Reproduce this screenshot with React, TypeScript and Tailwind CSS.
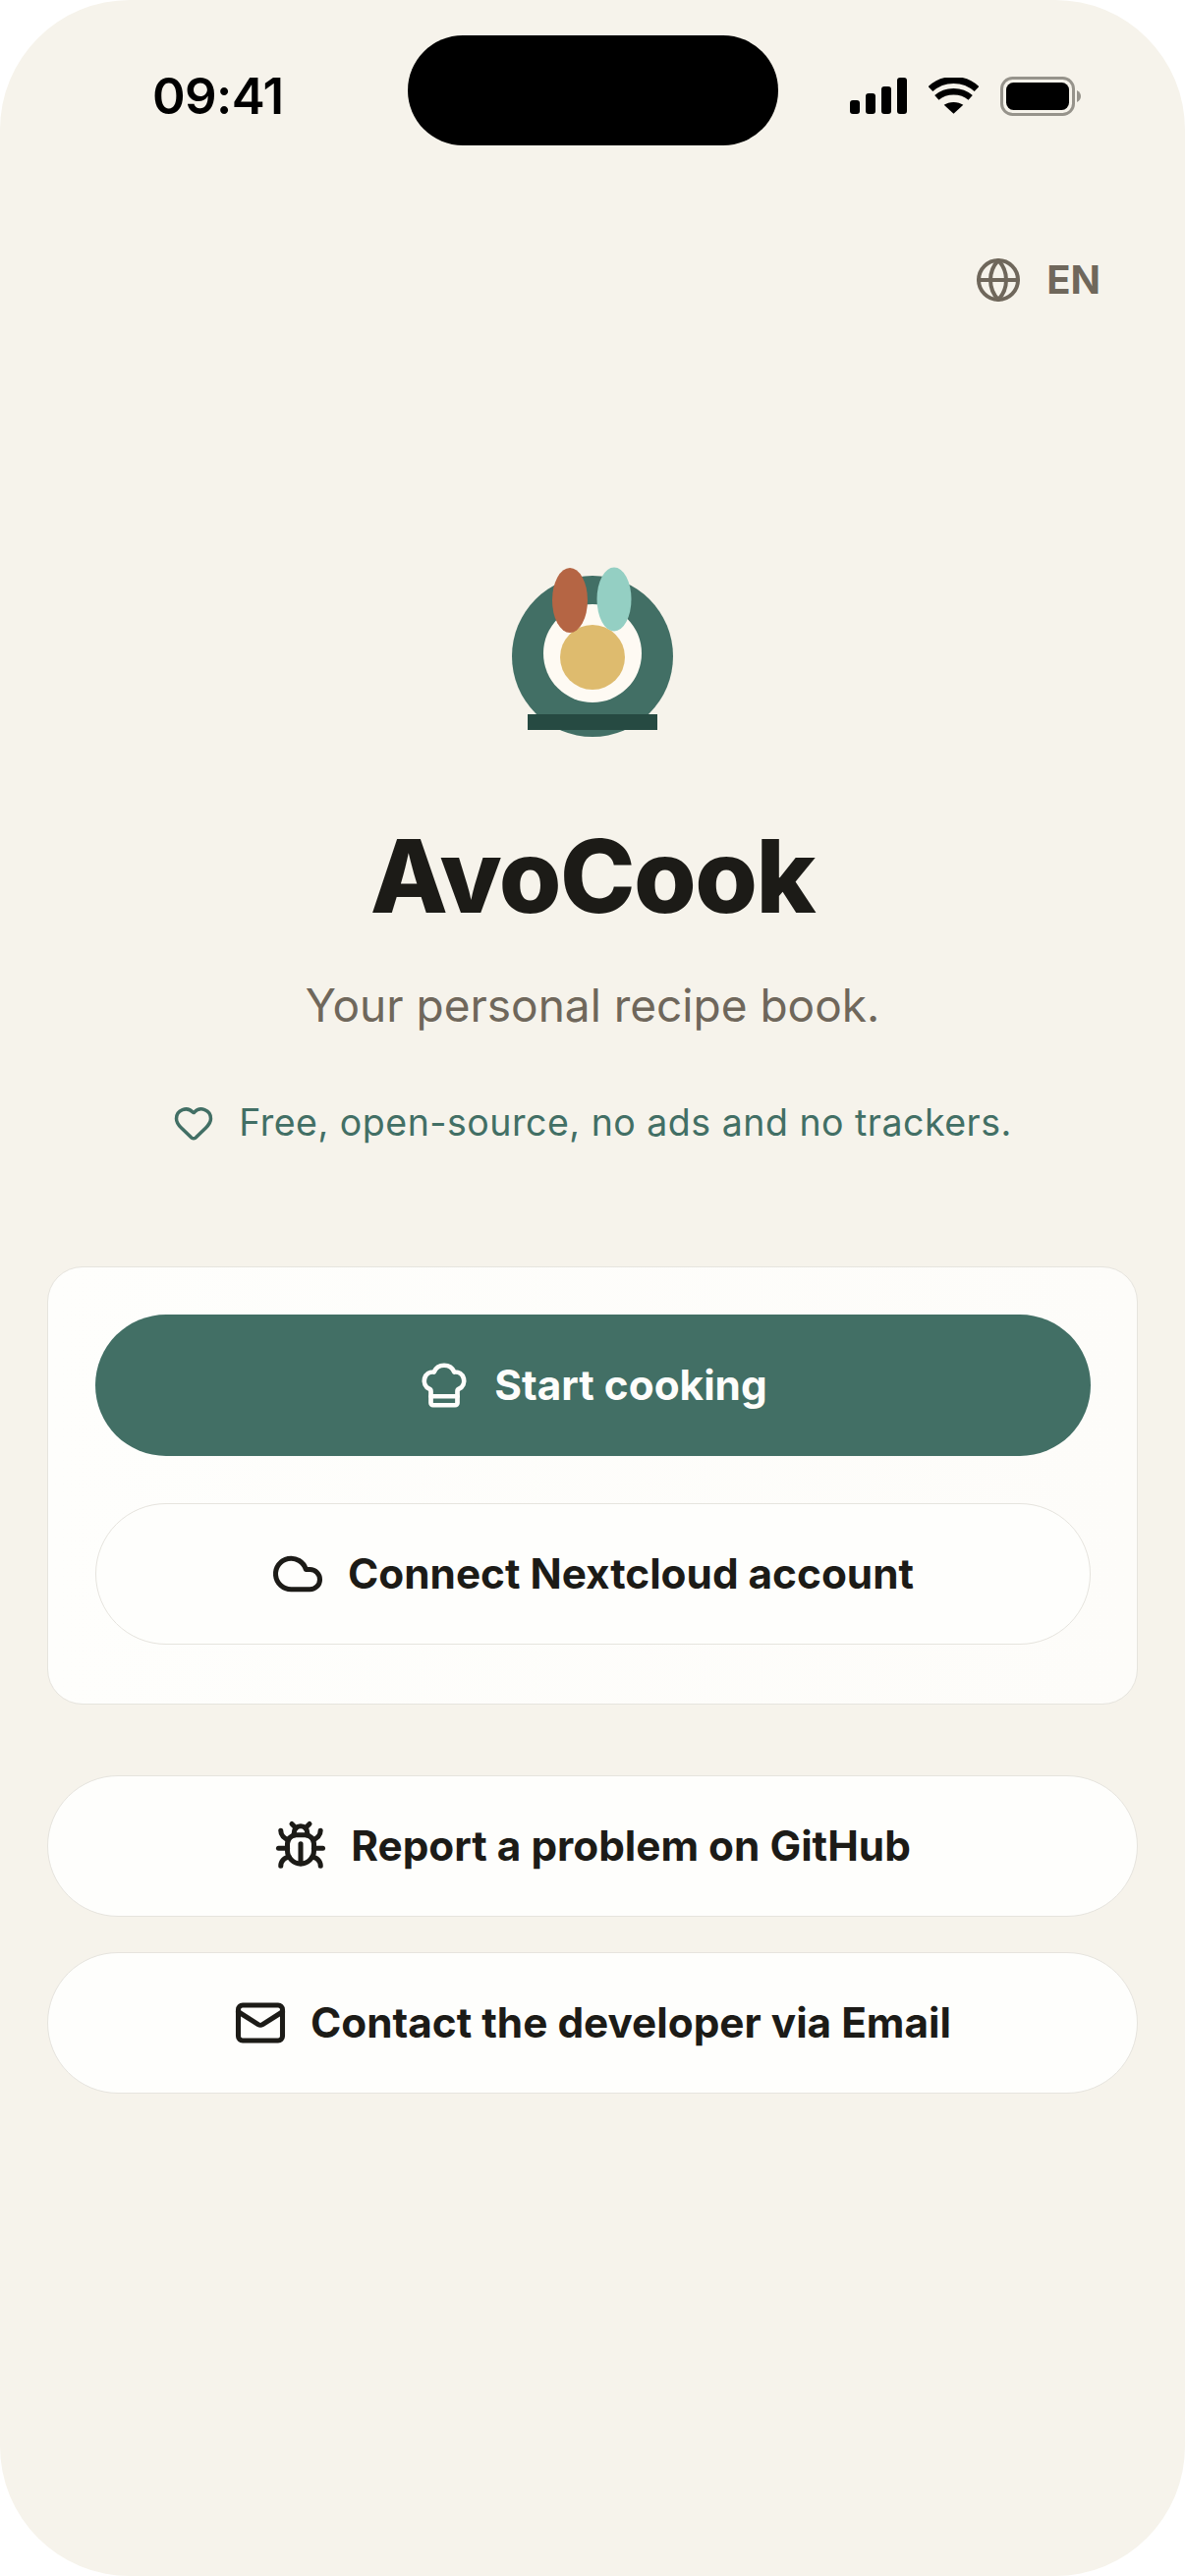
import { ChefHat, Cloud, Globe, Heart, Mail } from "lucide-react";
import type { ReactNode } from "react";

function SignalIcon() {
  return (
    <svg width="58" height="38" viewBox="0 0 58 38" fill="#000">
      <rect x="0" y="23" width="10" height="14" rx="3" />
      <rect x="16" y="16" width="10" height="21" rx="3" />
      <rect x="32" y="9" width="10" height="28" rx="3" />
      <rect x="48" y="0" width="10" height="37" rx="3" />
    </svg>
  );
}

function WifiIcon() {
  return (
    <svg width="51" height="38" viewBox="0 0 52 38" fill="none">
      <path d="M26 37 L16 28 C21 24 31 24 36 28 Z" fill="#000" />
      <path d="M8.5 20.5 C18 12 34 12 43.5 20.5" stroke="#000" strokeWidth="6.5" />
      <path d="M2 11.5 C15 -1 37 -1 50 11.5" stroke="#000" strokeWidth="7" />
    </svg>
  );
}

function BatteryIcon() {
  return (
    <svg width="82" height="40" viewBox="0 0 82 40" fill="none">
      <rect x="1.5" y="1.5" width="73" height="37" rx="11" stroke="#96938b" strokeWidth="3" />
      <rect x="6" y="6" width="64" height="28" rx="7.5" fill="#000" />
      <path d="M78 14 C81 15.5 82 18 82 20 C82 22 81 24.5 78 26 Z" fill="#96938b" />
    </svg>
  );
}

function BugIcon() {
  return (
    <svg width="54" height="54" viewBox="0 0 24 24" fill="none" stroke="currentColor" strokeWidth="2.25" strokeLinecap="round" strokeLinejoin="round">
      <path d="m8 2 1.88 1.88" />
      <path d="M14.12 3.88 16 2" />
      <path d="M9 7.13v-1a3.003 3.003 0 1 1 6 0v1" />
      <path d="M12 20c-3.3 0-6-2.7-6-6v-3a4 4 0 0 1 4-4h4a4 4 0 0 1 4 4v3c0 3.3-2.7 6-6 6" />
      <path d="M12 20v-9" />
      <path d="M6.53 9C4.6 8.8 3 7.1 3 5" />
      <path d="M6 13H2" />
      <path d="M3 21c0-2.1 1.7-3.9 3.8-4" />
      <path d="M20.97 5c0 2.1-1.6 3.8-3.5 4" />
      <path d="M22 13h-4" />
      <path d="M17.2 17c2.1.1 3.8 1.9 3.8 4" />
    </svg>
  );
}

function AvoLogo() {
  return (
    <svg width="170" height="180" viewBox="0 0 170 180">
      <circle cx="85" cy="93" r="82" fill="#426f65" />
      <circle cx="85" cy="90" r="50" fill="#fefaf3" />
      <circle cx="85" cy="94" r="33" fill="#debb6e" />
      <ellipse cx="62" cy="36" rx="18" ry="33" fill="#b56544" />
      <ellipse cx="107" cy="35" rx="17.5" ry="32.5" fill="#94cfc3" />
      <rect x="19" y="152" width="132" height="16" fill="#264a42" />
    </svg>
  );
}

interface ActionButtonProps {
  icon: ReactNode;
  label: string;
  primary?: boolean;
}

function ActionButton({ icon, label, primary = false }: ActionButtonProps) {
  return (
    <button
      type="button"
      className={
        primary
          ? "flex h-[144px] w-full items-center justify-center gap-[24px] rounded-full bg-[#426f65] text-[#fefdfb]"
          : "flex h-[144px] w-full items-center justify-center gap-[24px] rounded-full border-[1.5px] border-[#e6e4de] bg-[#fefefc] text-[#1c1b17]"
      }
    >
      {icon}
      <span className="text-[42.3px] font-bold leading-none">{label}</span>
    </button>
  );
}

export default function App() {
  return (
    <div className="h-[2622px] w-[1206px] bg-white font-['Inter',sans-serif]">
      <div className="flex h-full flex-col rounded-[132px] bg-[#f6f3eb]">
        {/* status bar */}
        <div className="grid grid-cols-[1fr_377px_1fr] items-start pt-[36px]">
          <span className="mt-[29px] pl-[155px] text-[51px] font-semibold leading-[66px] tracking-[-0.6px] text-black">09:41</span>
          <div className="h-[112px] rounded-[56px] bg-black" />
          <div className="mt-[42px] flex items-center justify-end gap-[22px] pr-[106px]">
            <SignalIcon />
            <WifiIcon />
            <BatteryIcon />
          </div>
        </div>

        <div className="mt-[113px] flex items-center justify-end gap-[25px] pr-[86px] text-[#6f675b]">
          <Globe size={48} strokeWidth={2} />
          <span className="text-[40px] font-bold leading-none">EN</span>
        </div>

        <div className="mt-[266px] flex flex-col items-center">
          <AvoLogo />
          <h1 className="mt-[85px] text-[103px] font-extrabold leading-none tracking-[-1.5px] text-[#1c1b17]">AvoCook</h1>
          <p className="mt-[57px] text-[46px] leading-none text-[#6f675b]">Your personal recipe book.</p>
          <div className="mt-[76px] flex items-center gap-[25px] text-[#426f65]">
            <Heart size={42} strokeWidth={2} />
            <span className="text-[37.5px] leading-none tracking-[0.5px]">Free, open-source, no ads and no trackers.</span>
          </div>
        </div>

        <div className="mx-[48px] mt-[125px] flex flex-col gap-[48px] rounded-[36px] border-[1.5px] border-[#e6e4de] bg-linear-to-r from-[#fefefc] to-[#fdfcf9] px-[47.5px] pb-[60px] pt-[48px]">
          <ActionButton primary icon={<ChefHat size={54} strokeWidth={2.1} />} label="Start cooking" />
          <ActionButton icon={<Cloud size={54} strokeWidth={2.25} />} label="Connect Nextcloud account" />
        </div>

        <div className="mx-[48px] mt-[72px] flex flex-col gap-[36px]">
          <ActionButton icon={<BugIcon />} label="Report a problem on GitHub" />
          <ActionButton icon={<Mail size={54} strokeWidth={2.25} />} label="Contact the developer via Email" />
        </div>
      </div>
    </div>
  );
}
